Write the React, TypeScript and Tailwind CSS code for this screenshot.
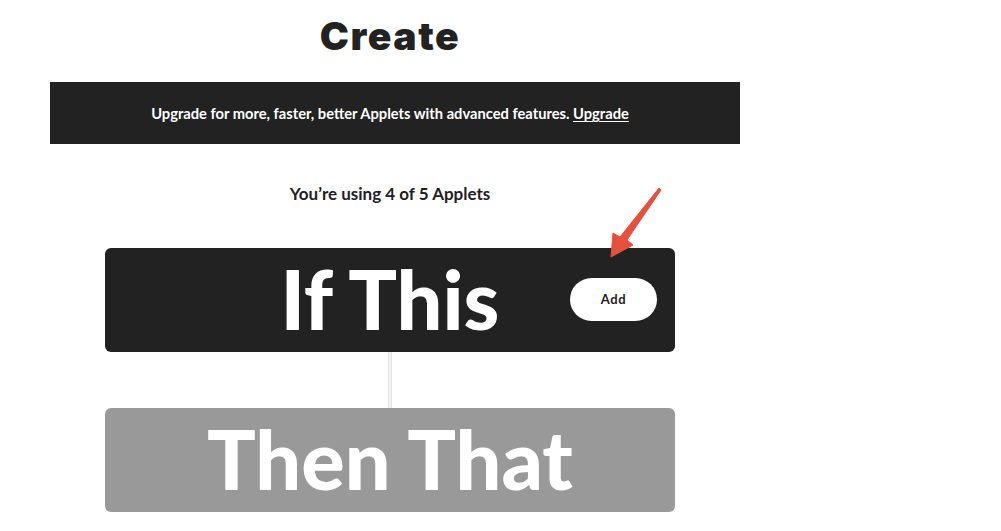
import React from "react";

export default function App() {
  return (
    <div className="relative w-[1001px] h-[531px] overflow-hidden bg-white" style={{ fontFamily: "Lato, 'Noto Sans', sans-serif" }}>
      <div className="ml-[50px] w-[690px] flex flex-col">
        <div className="h-[82px] pr-[10px] flex items-start justify-center pt-[13px]">
          <h1 className="text-[39px] leading-[46px] font-black text-[#222] tracking-[1.6px]" style={{ fontFamily: "Inter, Lato, sans-serif" }}>Create</h1>
        </div>
        <div className="h-[62px] bg-[#222] flex items-center justify-center pr-[10px]">
          <p className="text-[14.7px] font-bold text-white">
            Upgrade for more, faster, better Applets with advanced features.{" "}
            <span className="underline underline-offset-2">Upgrade</span>
          </p>
        </div>
        <div className="h-[100px] flex items-center justify-center pr-[10px]">
          <p className="text-[17px] font-bold text-[#222]">You’re using 4 of 5 Applets</p>
        </div>
        <div className="mt-[4px] ml-[55px] w-[570px] flex flex-col items-center">
          <div className="relative w-full h-[104px] rounded-[6px] bg-[#222] flex items-center justify-center">
            <span className="text-[81px] leading-none font-black text-white pb-[4px]">If This</span>
            <button className="absolute left-[465px] top-[30px] w-[87px] h-[43px] rounded-full bg-white text-[13px] tracking-[0.6px] font-bold text-[#222]">
              Add
            </button>
          </div>
          <div className="w-[4px] h-[56px] bg-[#f2f2f2] border-x border-[#e6e6e6]" />
          <div className="w-full h-[104px] rounded-[6px] bg-[#999] flex items-center justify-center">
            <span className="text-[81px] leading-none font-black text-white pb-[4px]">Then That</span>
          </div>
        </div>
      </div>
      <svg className="absolute left-0 top-0 pointer-events-none" width="1001" height="531">
        <polygon points="659,188 661,190 627,240 633,245 611,257 613,233 620,237" fill="#e6503c" stroke="#e6503c" strokeWidth="1" strokeLinejoin="round" />
      </svg>
    </div>
  );
}
